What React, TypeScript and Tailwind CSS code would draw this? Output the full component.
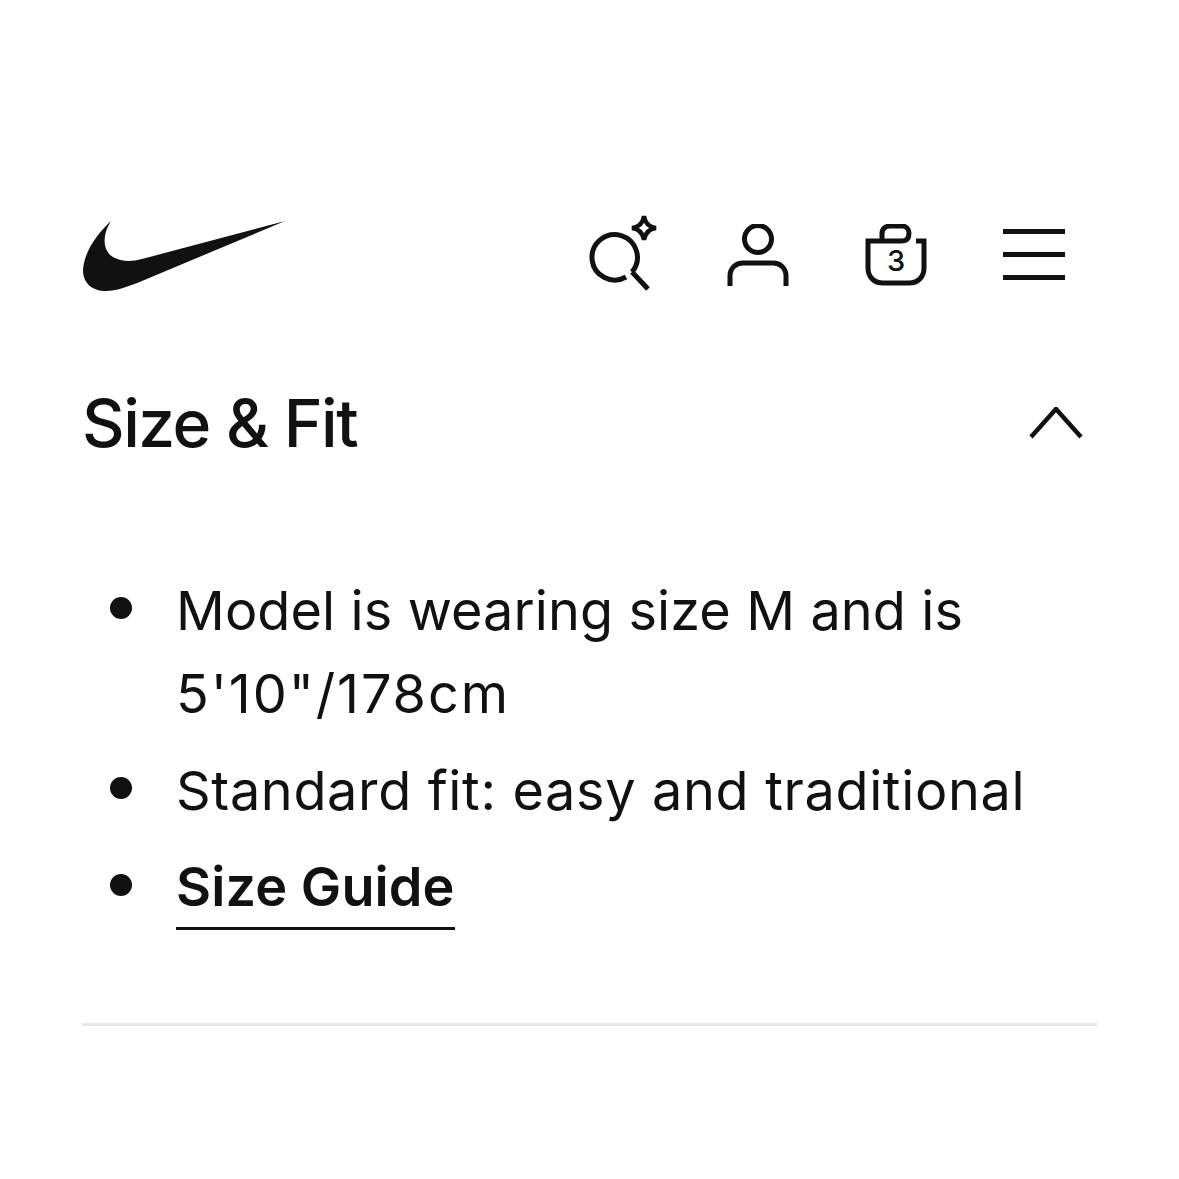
function Swoosh() {
  return (
    <svg width="204" height="72" viewBox="0 0 204 72" fill="#111111">
      <path d="M29 1C15 14 2 32 1 50C1 63 10 71 24 71C34 71 45 67 60 61L203 1L60 39C50 41.500 41 42 33 38C21 33 19 16 29 1Z" />
    </svg>
  );
}

function SearchIcon() {
  return (
    <svg width="75" height="82" viewBox="0 0 75 82" fill="none" stroke="#111111" strokeWidth="5">
      <path d="M41 67A22.700 22.700 0 1 1 47 62" />
      <path d="M47 62L63 79" />
      <path d="M59 6Q60.500 16.500 71 18Q60.500 19.500 59 30Q57.500 19.500 47 18Q57.500 16.500 59 6Z" strokeWidth="4.500" />
    </svg>
  );
}

function UserIcon() {
  return (
    <svg width="62" height="62" viewBox="0 0 62 62" fill="none" stroke="#111111" strokeWidth="5">
      <circle cx="31" cy="15" r="13.500" />
      <path d="M3 62V52C3 44 9 39 16 39H46C53 39 59 44 59 52V62" />
    </svg>
  );
}

function BagIcon() {
  return (
    <div className="relative h-[62px] w-[62px]">
      <svg width="62" height="62" viewBox="0 0 62 62" fill="none" stroke="#111111" strokeWidth="5">
        <path d="M51 17H59V44C59 53 53 59 44 59H18C9 59 3 53 3 44V17H37C42 17 44 14 44 9C44 5 41 2 37 2H25C20 2 17 5 17 10V17" />
      </svg>
      <span className="absolute inset-x-0 top-[22px] text-center text-[29px] font-medium leading-[30px] text-[#111111]">
        3
      </span>
    </div>
  );
}

function MenuIcon() {
  return (
    <div className="flex h-[51px] w-[62px] flex-col justify-between">
      <div className="h-[5px] bg-[#111111]" />
      <div className="h-[5px] bg-[#111111]" />
      <div className="h-[5px] bg-[#111111]" />
    </div>
  );
}

export default function App() {
  return (
    <div className="min-h-[1179px] bg-white px-[82px] pt-[220px] font-['Inter',sans-serif] text-[#111111]">
      {/* Header */}
      <div className="flex h-[72px] items-start justify-between">
        <Swoosh />
        <div className="flex items-start pr-[32px]">
          <div className="mt-[-10px]">
            <SearchIcon />
          </div>
          <div className="ml-[67px] mt-[4px]">
            <UserIcon />
          </div>
          <div className="ml-[76px] mt-[4px]">
            <BagIcon />
          </div>
          <div className="ml-[76px] mt-[9px]">
            <MenuIcon />
          </div>
        </div>
      </div>

      {/* Accordion */}
      <div className="mt-[91px] flex h-[80px] items-center justify-between">
        <h2 className="text-[66px] font-medium leading-[80px] tracking-[-1.500px]">Size &amp; Fit</h2>
        <svg className="mr-[14px]" width="54" height="32" viewBox="0 0 54 32" fill="none" stroke="#111111" strokeWidth="4.500">
          <path d="M2 30L27 2L52 30" />
        </svg>
      </div>

      <ul className="mt-[106px] flex flex-col text-[54px] leading-[83px]">
        <li className="flex">
          <span className="mt-[28px] ml-[28px] h-[22px] w-[22px] shrink-0 rounded-full bg-[#111111]" />
          <span className="ml-[44px] flex flex-col">
            <span className="tracking-[0.100px]">Model is wearing size M and is</span>
            <span className="tracking-[1.900px]">5'10"/178cm</span>
          </span>
        </li>
        <li className="mt-[14px] flex">
          <span className="mt-[28px] ml-[28px] h-[22px] w-[22px] shrink-0 rounded-full bg-[#111111]" />
          <span className="ml-[44px] tracking-[0.650px]">Standard fit: easy and traditional</span>
        </li>
        <li className="mt-[14px] flex">
          <span className="mt-[28px] ml-[28px] h-[22px] w-[22px] shrink-0 rounded-full bg-[#111111]" />
          <a className="ml-[44px] mt-[1px] border-b-[3px] border-[#111111] font-semibold leading-[80px] tracking-[0.100px]">Size Guide</a>
        </li>
      </ul>

      <div className="mt-[93px] h-[3px] bg-[#e5e5e5]" />
    </div>
  );
}
